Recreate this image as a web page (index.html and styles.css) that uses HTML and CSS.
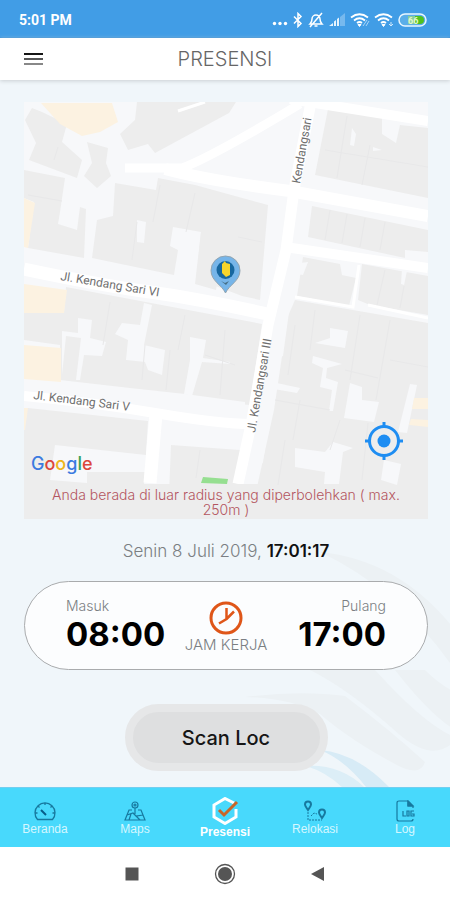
FILE: index.html
```html
<!DOCTYPE html>
<html lang="id">
<head>
<meta charset="utf-8">
<meta name="viewport" content="width=device-width, initial-scale=1">
<title>Presensi</title>
<link rel="stylesheet" href="styles.css">
</head>
<body>
<div class="status">
  <span class="clock">5:01 PM</span>
  <div class="status-icons">
    <svg width="16" height="16" viewBox="0 0 16 16" fill="#fff"><circle cx="2.500" cy="11.500" r="1.700"/><circle cx="8" cy="11.500" r="1.700"/><circle cx="13.500" cy="11.500" r="1.700"/></svg>
    <svg width="12" height="16" viewBox="0 0 12 16" fill="none" stroke="#fff" stroke-width="1.500"><path d="M2 4.500l7 7L6 14.500v-13l3 3-7 7"/></svg>
    <svg width="16" height="16" viewBox="0 0 16 16" fill="none" stroke="#fff" stroke-width="1.500"><path d="M2 12h12c-2-2-2-3-2-5a4 4 0 0 0-8 0c0 2 0 3-2 5zM6.500 14h3M14 1L2 15"/></svg>
    <svg width="18" height="16" viewBox="0 0 18 16"><path d="M1 14h4v-3zM6 14h2V8L6 9.500zM9 14h2V5.500L9 7z" fill="#e6f3fd"/><path d="M12 14h5V1l-5 4z" fill="#76b9ee"/></svg>
    <svg width="20" height="16" viewBox="0 0 20 16" fill="none" stroke="#fff" stroke-width="1.800"><path d="M1 5.500q8.500-6.500 17 0M4 8.500q5.500-4.500 11 0M7 11q2.500-2 5 0"/><path d="M8 12.500l1.500 2 1.500-2z" fill="#fff" stroke-width="1"/><path d="M17 8l-4 6M19 9l-3 5" stroke="#a9d5f7" stroke-width="1"/></svg>
    <svg width="20" height="16" viewBox="0 0 20 16" fill="none" stroke="#fff" stroke-width="1.800"><path d="M1 5.500q8.500-6.500 17 0M4 8.500q5.500-4.500 11 0M7 11q2.500-2 5 0"/><path d="M8 12.500l1.500 2 1.500-2z" fill="#fff" stroke-width="1"/><path d="M17 10v4M15 12l2 2 2-2" stroke="#cfe8fb" stroke-width="1"/></svg>
    <svg width="29" height="14" viewBox="0 0 29 14"><rect x="1" y="1" width="27" height="12" rx="6" fill="#5aaee9" stroke="#e8f6ff" stroke-width="1.500"/><path d="M10 3h7v8h-7z" fill="#86cd9a"/><path d="M17 3h5a4 4 0 0 1 0 8h-5z" fill="#4fc21f"/><text x="10" y="10.500" class="battery">66</text></svg>
  </div>
</div>
<header class="bar">
  <button class="menu" type="button" aria-label="Menu"><svg width="20" height="14" viewBox="0 0 20 14"><path d="M0 2h19" stroke="#151515" stroke-width="2"/><path d="M0 7h19" stroke="#555" stroke-width="2"/><path d="M0 12h19" stroke="#888" stroke-width="2"/></svg></button>
  <h1>PRESENSI</h1>
</header>
<main>
  <svg class="backdrop" viewBox="0 0 450 707" preserveAspectRatio="xMidYMax slice" aria-hidden="true">
    <g fill="#ecf1f4">
      <path d="M320 472Q400 480 455 550V590Q400 510 320 472z"/>
      <path d="M310 590L375 590Q420 640 450 655V665Q430 680 400 655Q350 610 310 590z"/>
      <path d="M395 590H425Q440 605 455 612V650Q430 635 395 590z"/>
      <path d="M245 617Q300 610 345 616Q390 650 425 682Q420 698 395 684Q350 660 320 634Q290 618 245 617z"/>
    </g>
    <path d="M306 686Q340 684 364 707H342Q326 692 306 686z" fill="#dceef7"/>
    <path d="M320 670Q356 673 389 707H366Q345 680 320 670z" fill="#d7ebf6"/>
  </svg>
  <section class="map" aria-label="Peta lokasi">
    <svg class="tiles" viewBox="24 102 404 417">
      <path d="M24 102h404v417H24z" fill="#f7f8fa"/>
      <g fill="#ededed">
        <path d="M25 120L32 108L42 112L67 124L62 142L82 160L77 178L29 160L36 143z"/>
        <path d="M87 142L108 148L106 163L111 176L97 188L84 176L92 163z"/>
        <path d="M24 170L65 178L60 212L58 224L77 230L80 207L86 209L84 258L28 248L34 202L24 198z"/>
        <path d="M137 102H236L229 113L155 153L148 144L128 150L120 134L135 120z"/>
        <path d="M115 183L156 190L158 178L195 185L268 205L260 300L242 296L200 280L196 282L201 232L173 227L170 246L178 250L174 275L92 258L97 220L113 216z"/>
        <path d="M201 232L223 236L221 260L216 290L195 284z"/>
        <path d="M328 109L382 118V134L396 143L400 125L428 128V198L315 175z"/>
        <path d="M312 206L428 230V252L405 250V258L308 237z"/>
        <path d="M303 257L340 264L342 275L356 278L349 306L297 296z"/>
        <path d="M362 264L428 276V315L370 305L358 300z"/>
        <path d="M295 300L428 323V519H250L274 410L288 316z"/>
        <path d="M66 287L262 324L250 405L160 397L60 383V345L24 340V313L64 312z"/>
        <path d="M28 408L148 421L144 485H240V519H24V410z"/>
        <path d="M171 445L240 450V519H168z"/>
      </g>
      <g fill="#f7f8fa">
        <path d="M137 220L146 222L144 243L137 242z"/>
        <path d="M62 331L78 333V318L92 320L90 338L106 342L102 356L84 355L80 380H76L81 338L66 336L62 375z"/>
        <path d="M115 334L122 323L140 325L144 303L152 305L144 345L165 350L162 375L148 370L145 362L126 360L128 340z"/>
        <path d="M190 337L206 340L203 358L230 362V364L202 362L192 396L184 394L190 360z"/>
        <path d="M60 380L130 388L185 394L245 402V408L60 396z"/>
        <path d="M55 445L146 455V472H87V483L50 480z"/>
        <path d="M330 328L348 331L345 348L315 343L330 338z"/>
        <path d="M313 356L342 364L327 368L326 378L338 382L333 411H329L332 390L320 387L323 368L312 363z"/>
        <path d="M350 383L362 387V400L379 402L374 422L344 418z"/>
        <path d="M410 384L417 385L407 433L398 432z"/>
        <path d="M295 448L325 452L333 442L353 448L343 452L339 484H324L325 472L295 467z"/>
        <path d="M384 460L401 464L397 485L381 480z"/>
        <path d="M272 382L300 388L297 393L268 388z"/>
        <path d="M260 425L269 422L263 462L250 484L254 450z"/>
        <path d="M352 128L356 134L354 146L350 145zM373 147L382 150L373 151zM402 269L407 271L404 285L401 284z"/>
        <path d="M300 263L308 262L303 275L296 274zM283 318L289 312L283 356L272 360z"/>
      </g>
      <g fill="none" stroke="#e8e8e9" stroke-width="1">
        <path d="M58 147L54 160M28 195L62 201M160 185L153 222M195 193L186 232M137 222L132 260M238 237L262 242M347 116L337 178M370 145L362 185M325 150L428 167M330 210L325 240M347 214L342 243M365 218L360 247M385 222L380 250M385 270L377 305M404 286L400 308"/>
        <path d="M110 302L103 345M145 345L142 380M185 315L178 350M170 350L166 390M205 355L235 365M225 330L220 395M295 325L288 375M315 310L310 350M360 315L350 380M390 320L376 400M300 400L293 440M275 400L330 410M340 420L330 450M368 423L362 480M390 360L428 367M345 370L378 378M285 440L278 485M200 450L196 478"/>
      </g>
      <g fill="#fcf2e1">
        <path d="M41 103H112L118 122L100 132L82 136L60 124z"/>
        <path d="M24 198L35 203L28 248L24 247zM24 284L67 290L64 313H24zM24 345L61 348V382L24 379z"/>
        <path d="M414 398H428V409H412zM411 419L428 420V427L409 425z"/>
        <path d="M24 408H28L25 430H24z"/>
      </g>
      <g fill="none" stroke="#fff">
        <path d="M125 168H182Q210 158 300 104" stroke-width="9"/>
        <path d="M165 169Q210 181 290 191L428 216" stroke-width="12"/>
        <path d="M290 99L428 121M285 247L428 268M24 396Q90 402 155 413T252 424" stroke-width="10"/>
        <path d="M24 269Q100 285 150 292T272 315" stroke-width="13"/>
        <path d="M311 102L294 190L286 250L268 325L252 420L238 484" stroke-width="11"/>
        <path d="M156 414L150 483" stroke-width="13"/>
        <path d="M295 297L353 307L359 265M368 305L428 318M205 102L178 111" stroke-width="3"/>
      </g>
      <path d="M228 484H265V519H228zM140 484H170V519H140z" fill="#ededed"/>
      <path d="M203 477L228 479L227 484L201 483z" fill="#96df91"/>
      <g class="streets">
        <text transform="translate(60 280) rotate(9.500)">Jl. Kendang Sari VI</text>
        <text transform="translate(33 399) rotate(7)">Jl. Kendang Sari V</text>
        <text transform="translate(300 184) rotate(-80)">Kendangsari</text>
        <text transform="translate(255 433) rotate(-80)">Jl. Kendangsari III</text>
      </g>
      <g>
        <path d="M225.500 293C222 285 211 281 211 270.500a14.500 14.500 0 0 1 29 0C240 281 229 285 225.500 293z" fill="#76b5e9" stroke="#93a5b1" stroke-width="1"/>
        <circle cx="225.500" cy="270" r="9" fill="#17679f"/>
        <path d="M222 264l3-3 1 2 4 1v11l-4 2-4-4z" fill="#f7d52b"/>
        <path d="M221 281l4 2 4-2-3 4z" fill="#476f86"/>
      </g>
    </svg>
    <span class="google"><span class="g-blue">G</span><span class="g-red">o</span><span class="g-yellow">o</span><span class="g-blue">g</span><span class="g-green">l</span><span class="g-red">e</span></span>
    <button class="locate" type="button" aria-label="Lokasi saya"><svg width="38" height="38" viewBox="0 0 38 38" fill="none" stroke="#1e8df2" stroke-width="3"><circle cx="19" cy="19" r="14.500"/><circle cx="19" cy="19" r="6.500" fill="#1e8df2" stroke="none"/><path d="M19 0v6M19 32v6M0 19h6M32 19h6"/></svg></button>
    <p class="warning">Anda berada di luar radius yang diperbolehkan ( max. 250m )</p>
  </section>
  <p class="date">Senin 8 Juli 2019, <strong>17:01:17</strong></p>
  <section class="hours">
    <div class="time"><span class="label">Masuk</span><strong>08:00</strong></div>
    <div class="work"><svg width="34" height="34" viewBox="0 0 34 34" fill="none" stroke="#df5619" stroke-width="3"><circle cx="17" cy="17" r="15"/><path d="M17.500 7v11L10 22.500M17.500 18L25 10.500" stroke-width="2.500"/></svg><span>JAM KERJA</span></div>
    <div class="time end"><span class="label">Pulang</span><strong>17:00</strong></div>
  </section>
  <button class="scan" type="button">Scan Loc</button>
</main>
<nav class="tabs" aria-label="Menu utama">
  <a href="#"><svg width="24" height="22" viewBox="0 0 24 22" fill="none" stroke="#17799f" stroke-width="1.300"><path d="M4.500 19.500a10 10 0 1 1 15 0zM12 3v2M5 6l1.500 1.500M19 6l-1.500 1.500M2.500 13h2M19.500 13h2"/><path d="M8 10l5 5" stroke="#075d89" stroke-width="2"/></svg>Beranda</a>
  <a href="#"><svg width="24" height="22" viewBox="0 0 24 22" fill="none" stroke="#17799f" stroke-width="1.200"><circle cx="12" cy="5" r="3"/><circle cx="12" cy="5" r="1"/><path d="M12 8v6M9 10H6L2 20h20L18 10h-3M4 15l6-2 3 3 7-1M8 14l-2 6M13 16l4 4"/></svg>Maps</a>
  <a href="#" class="active" aria-current="page"><svg width="28" height="28" viewBox="0 0 28 28" fill="none"><path d="M25 12v8l-11 6.500L3 20V8l11-6.500L23 6" stroke="#fff" stroke-width="3"/><path d="M8 13l5 5L26 5" stroke="#c96527" stroke-width="3"/></svg>Presensi</a>
  <a href="#"><svg width="24" height="22" viewBox="0 0 24 22" fill="none" stroke="#17799f" stroke-width="2"><path d="M5 10C3 7 2 6 2 4.500a3 3 0 0 1 6 0C8 6 7 7 5 10zM19 18c-2-3-3-4-3-5.500a3 3 0 0 1 6 0c0 1.500-1 2.500-3 5.500z"/><path d="M5 12v8h14M8 16l3-3 3 1" stroke-width="1" stroke-dasharray="2 1"/></svg>Relokasi</a>
  <a href="#"><svg width="20" height="22" viewBox="0 0 20 22" fill="none" stroke="#17799f" stroke-width="1.200"><path d="M18 8V6l-5-5H4Q2 1 2 3v16q0 2 2 2h12q2 0 2-2M13 1v5h5"/><path d="M13 1l5 5h-5z" fill="#17799f"/><path d="M8 11v5h3M12 11h2v5h-2zM19 11h-3v5h3v-2h-2"/></svg>Log</a>
</nav>
<div class="system">
  <button type="button" aria-label="Aplikasi terbaru"><svg width="22" height="22" viewBox="0 0 22 22"><path d="M4.500 4.500h13v13h-13z" fill="#555"/></svg></button>
  <button type="button" aria-label="Layar utama"><svg width="22" height="22" viewBox="0 0 22 22"><circle cx="11" cy="11" r="9.500" fill="none" stroke="#555" stroke-width="1.300"/><circle cx="11" cy="11" r="7" fill="#555"/></svg></button>
  <button type="button" aria-label="Kembali"><svg width="22" height="22" viewBox="0 0 22 22"><path d="M4 11l13-7v14z" fill="#555"/></svg></button>
</div>
</body>
</html>
```
FILE: styles.css
```css
* { box-sizing: border-box; }
body {
  margin: 0;
  min-height: 100vh;
  display: flex;
  flex-direction: column;
  font-family: Inter, "Open Sans", sans-serif;
  background: #fff;
  color: #7b7f83;
}
button { border: 0; padding: 0; background: none; font: inherit; cursor: pointer; }
svg { display: block; }
h1, p { margin: 0; }

.status {
  height: 38px;
  padding: 2px 23px 0 19px;
  display: flex;
  align-items: center;
  justify-content: space-between;
  background: #419de6;
  border-bottom: 1px solid #3391dc;
  color: #fff;
}
.clock { font: 700 14px Roboto, sans-serif; }
.status-icons { display: flex; align-items: center; gap: 4px; }
.battery { font: 700 9px Roboto, sans-serif; fill: #e3f8cd; }

.bar {
  position: relative;
  z-index: 1;
  height: 42px;
  padding: 0 24px;
  display: grid;
  grid-template-columns: 1fr auto 1fr;
  align-items: center;
  background: #fff;
  box-shadow: 0 1px 4px #c9ced2;
}
.menu { justify-self: start; }
.bar h1 { font-size: 20px; font-weight: 300; line-height: 24px; color: #666; }

main {
  position: relative;
  flex: 1;
  padding: 22px 22px 16px 24px;
  display: flex;
  flex-direction: column;
  align-items: center;
  background: #f0f6fa;
}
.backdrop { position: absolute; inset: 0; width: 100%; height: 100%; }
.map { position: relative; width: 100%; }
.tiles { width: 100%; height: auto; }
.streets { font: 12px Roboto, sans-serif; fill: #6f6f6f; }
.google {
  position: absolute;
  left: 7px;
  bottom: 43px;
  font: 500 18px/24px Inter, sans-serif;
}
.g-blue { color: #3b7be0; }
.g-red { color: #dc473d; }
.g-yellow { color: #efb51d; }
.g-green { color: #39a15a; }
.locate { position: absolute; right: 25px; bottom: 59px; }
.warning {
  position: absolute;
  left: 20px;
  right: 20px;
  bottom: 2px;
  font-size: 14px;
  font-weight: 300;
  line-height: 15px;
  text-align: center;
  color: #b45560;
}

.date { position: relative; margin-top: 22px; font-size: 17px; line-height: 20px; font-weight: 300; }
.date strong { font-weight: 600; color: #111; }

.hours {
  position: relative;
  width: 100%;
  margin-top: 20px;
  padding: 16px 41px;
  height: 89px;
  display: grid;
  grid-template-columns: 1fr auto 1fr;
  border: 1px solid #a9abad;
  border-radius: 45px;
  background: #fcfdfe;
}
.time { display: flex; flex-direction: column; }
.end { align-items: flex-end; }
.label { font-size: 14px; font-weight: 300; line-height: 16px; }
.time strong { font-size: 33px; font-weight: 700; line-height: 40px; color: #000; }
.work { display: flex; flex-direction: column; align-items: center; padding-top: 3px; font-size: 15px; font-weight: 300; line-height: 20px; }

.scan {
  position: relative;
  width: 203px;
  height: 67px;
  margin-top: 34px;
  border: 8px solid #e6e7e8;
  border-radius: 34px;
  background: #dedfe0;
  font-size: 20px;
  font-weight: 500;
  color: #161616;
}

.tabs {
  height: 60px;
  display: grid;
  grid-template-columns: repeat(5, 1fr);
  background: #48d9fc;
  border-top: 1px solid #72cff0;
}
.tabs a {
  display: flex;
  flex-direction: column;
  align-items: center;
  padding-top: 12px;
  font: 12px/14px "Liberation Sans", sans-serif;
  color: #d5f7ff;
  text-decoration: none;
}
.tabs .active { padding-top: 9px; font-weight: 700; color: #fff; }

.system {
  height: 54px;
  display: flex;
  justify-content: center;
  align-items: center;
  gap: 71px;
}
```
